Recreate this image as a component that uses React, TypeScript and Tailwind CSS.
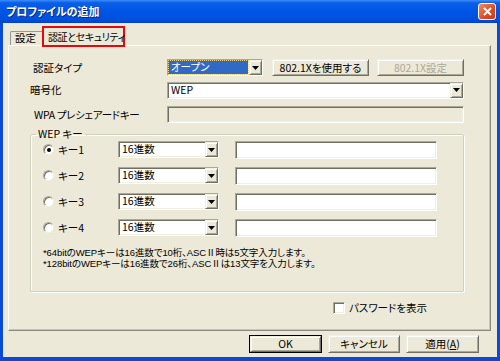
import React from 'react';

const sunken =
  'border border-t-[#ACA899] border-l-[#ACA899] border-b-white border-r-white shadow-[inset_1px_1px_0_#716F64,inset_-1px_-1px_0_#F1EFE2]';
const raised =
  'border border-t-[#F1EFE2] border-l-[#F1EFE2] border-b-[#716F64] border-r-[#716F64] shadow-[inset_1px_1px_0_#ffffff,inset_-1px_-1px_0_#ACA899]';

const Arrow = () => (
  <div className={`w-[13px] h-full flex items-center justify-center bg-[#ECE9D8] ${raised}`}>
    <svg width="7" height="4" viewBox="0 0 7 4">
      <path d="M0 0h7L3.5 4z" fill="#000" />
    </svg>
  </div>
);

const Combo = ({ className, text, selected }: { className: string; text: string; selected?: boolean }) => (
  <div className={`flex h-[17px] bg-white ${sunken} ${className}`}>
    <div className="flex-1 flex items-center p-[1px]">
      <div
        className={`h-full w-full flex items-center pl-[2px] leading-none ${
          selected ? 'bg-[#316AC5] text-white outline-1 outline-dotted outline-[#E8D080]' : ''
        }`}
      >
        {text}
      </div>
    </div>
    <Arrow />
  </div>
);

const Btn = ({
  children,
  className,
  disabled,
  isDefault,
}: {
  children: React.ReactNode;
  className: string;
  disabled?: boolean;
  isDefault?: boolean;
}) =>
  isDefault ? (
    <div className={`border border-black ${className}`}>
      <div className={`h-full flex items-center justify-center bg-[#ECE9D8] ${raised}`}>{children}</div>
    </div>
  ) : (
    <div
      className={`flex items-center justify-center whitespace-nowrap bg-[#ECE9D8] ${raised} ${
        disabled ? 'text-[#ACA899]' : ''
      } ${className}`}
    >
      {children}
    </div>
  );

const Radio = ({ checked }: { checked?: boolean }) => (
  <div className="w-[11px] h-[11px] rounded-full bg-white border border-t-[#ACA899] border-l-[#ACA899] border-b-[#F1EFE2] border-r-[#F1EFE2] shadow-[inset_1px_1px_0_#716F64] flex items-center justify-center">
    {checked && <div className="w-[4px] h-[4px] rounded-full bg-black" />}
  </div>
);

const KeyRow = ({ n, checked }: { n: number; checked?: boolean }) => (
  <div className="flex items-center h-[18px]">
    <div className="w-[87px] shrink-0 flex items-center gap-[4px] pl-[12px]">
      <Radio checked={checked} />
      <span>キー{n}</span>
    </div>
    <Combo className="w-[101px] shrink-0" text="16進数" />
    <div className={`ml-[16px] w-[202px] h-[18px] shrink-0 bg-white ${sunken}`} />
  </div>
);

export default function App() {
  return (
    <div className="w-[500px] h-[361px] flex flex-col bg-[#0a4ad8] overflow-hidden font-['Noto_Sans_CJK_JP',sans-serif] [font-feature-settings:'palt'] text-[10.5px] text-black">
      <div className="h-[23px] flex items-center justify-between pl-[6px] pr-[4px] bg-[linear-gradient(to_bottom,#3d8ef8_0%,#0b5ee9_12%,#0055e5_50%,#0050dc_85%,#0040c8_100%)]">
        <span className="text-white font-bold text-[11px] leading-none [text-shadow:1px_1px_0_#0a2a80]">
          プロファイルの追加
        </span>
        <div className="w-[18px] h-[17px] rounded-[3px] border border-white bg-[linear-gradient(135deg,#f08a68,#df4a22_60%,#c83a16)] flex items-center justify-center">
          <svg width="9" height="9" viewBox="0 0 9 9">
            <path d="M1 1l7 7M8 1L1 8" stroke="#fff" strokeWidth="2" />
          </svg>
        </div>
      </div>

      <div className="flex-1 mx-[3px] mb-[4px] bg-[#ECE9D8] flex flex-col">
        <div className="flex items-end pl-[7px] pt-[3px] h-[24px]">
          <div className="w-[32px] h-[14px] mb-[2px] border-t border-l border-[#919B9C] rounded-tl-[2px] flex items-center pl-[4px] leading-none">
            設定
          </div>
          <div className="relative z-10 w-[83px] h-[21px] border-2 border-[#E20A0A] bg-[#ECE9D8] flex items-center pl-[4px] leading-none whitespace-nowrap tracking-[-0.4px] text-[10px]">
            認証とセキュリティ
          </div>
        </div>

        <div className="ml-[5px] w-[483px] h-[286px] -mt-[2px] border border-t-white border-l-white border-r-[#8C8A7E] border-b-[#8C8A7E] shadow-[inset_-1px_-1px_0_#C8C5B5] flex flex-col pl-[21px] pt-[13px]">
          <div className="flex items-center h-[17px]">
            <div className="w-[137px] pl-[3px]">認証タイプ</div>
            <Combo className="w-[96px]" text="オープン" selected />
            <Btn className="ml-[9px] w-[97px] h-[17px]">802.1Xを使用する</Btn>
            <Btn className="ml-[8px] w-[87px] h-[17px]" disabled>
              802.1X設定
            </Btn>
          </div>
          <div className="flex items-center h-[16px] mt-[6px]">
            <div className="w-[137px]">暗号化</div>
            <Combo className="w-[297px]" text="WEP" />
          </div>
          <div className="flex items-center h-[17px] mt-[8px]">
            <div className="w-[137px] pl-[4px] tracking-[-0.3px]">WPA プレシェアードキー</div>
            <div className={`w-[297px] h-[17px] bg-[#ECE9D8] ${sunken}`} />
          </div>

          <fieldset className="mt-[6px] w-[434px] h-[163px] border border-[#D0D0BF] shadow-[1px_1px_0_#fff,inset_1px_1px_0_#fff] rounded-[2px] flex flex-col">
            <legend className="ml-[5px] px-[2px] leading-none">WEP キー</legend>
            <div className="flex flex-col gap-[8px] mt-[1px]">
              <KeyRow n={1} checked />
              <KeyRow n={2} />
              <KeyRow n={3} />
              <KeyRow n={4} />
            </div>
            <div className="mt-[10px] pl-[12px] font-['Liberation_Sans','Noto_Sans_CJK_JP',sans-serif] text-[9.5px] leading-[11px] tracking-[-0.1px]">
              <div>*64bitのWEPキーは16進数で10桁、ASCⅡ時は5文字入力します。</div>
              <div>*128bitのWEPキーは16進数で26桁、ASCⅡは13文字を入力します。</div>
            </div>
          </fieldset>

          <div className="mt-[8px] flex items-center gap-[4px] pl-[303px]">
            <div className={`w-[12px] h-[12px] bg-white ${sunken}`} />
            <span>パスワードを表示</span>
          </div>
        </div>

        <div className="flex justify-end gap-[6px] mt-[4px] pr-[18px]">
          <Btn className="w-[73px] h-[18px]" isDefault>
            OK
          </Btn>
          <Btn className="w-[72px] h-[18px]">キャンセル</Btn>
          <Btn className="w-[73px] h-[18px]">
            <span>
              適用(<span className="underline">A</span>)
            </span>
          </Btn>
        </div>
      </div>
    </div>
  );
}
